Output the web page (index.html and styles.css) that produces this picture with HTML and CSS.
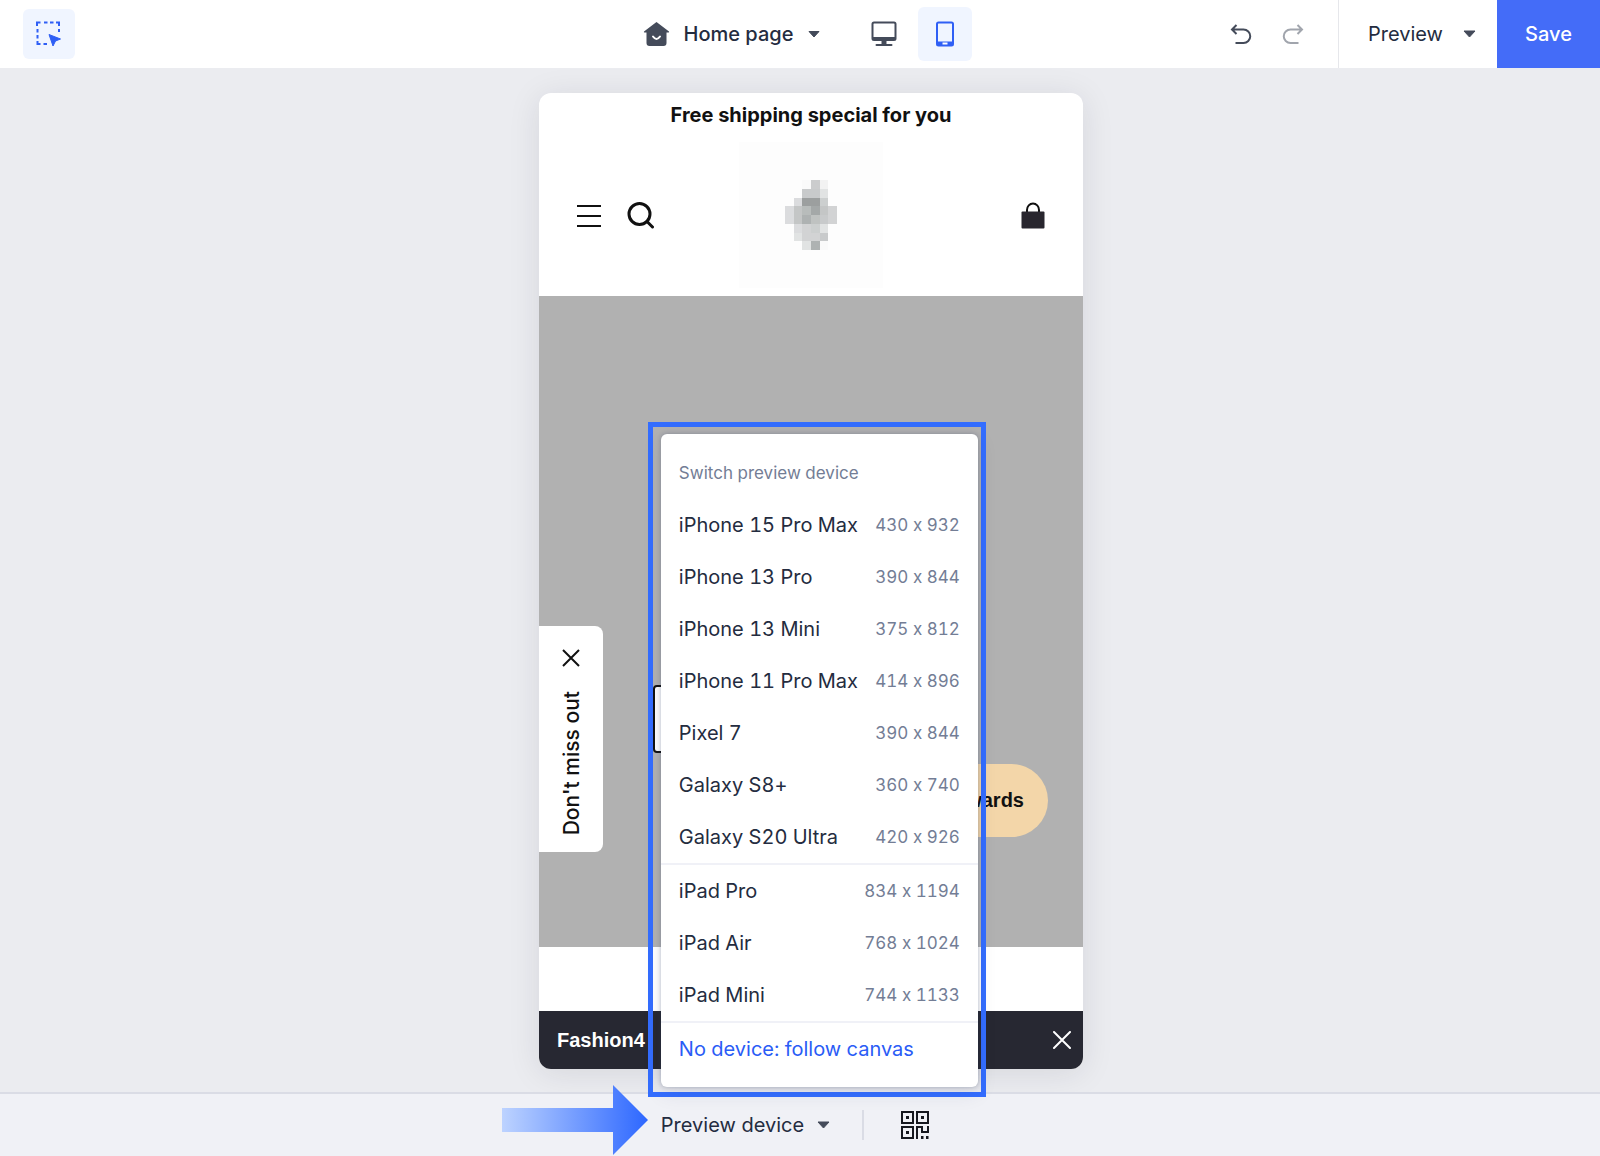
FILE: index.html
```html
<!DOCTYPE html>
<html lang="en">
  <head>
    <meta charset="utf-8">
    <title>Store editor</title>
    <link rel="stylesheet" href="styles.css">
  </head>
  <body>
    <header class="topbar">
      <div class="topbar-left">
        <button class="tool active" aria-label="Select element">
          <svg width="26" height="26" viewBox="0 0 26 26" fill="none">
            <path d="M1 5V1.500H4.500M8 1.500H11.500M14 1.500H17.500M20 1.500H23V5M23 8V11M1.500 8V11.500M1.500 14V17.500M1.500 20V23H4.500M7.500 23H11" stroke="#2f5ff5" stroke-width="2"/>
            <path d="M13 13.500L24.500 18L19.500 20L17 25Z" fill="#2f5ff5" stroke="#2f5ff5" stroke-linejoin="round"/>
          </svg>
        </button>
      </div>

      <div class="topbar-center">
        <label class="page-picker">
          <svg width="27" height="26" viewBox="0 0 27 26">
            <path d="M13.500 1L26 10.500Q26.500 11.500 25.500 11.500H23.500V22Q23.500 25 20.500 25H6.500Q3.500 25 3.500 22V11.500H1.500Q.500 11.500 1 10.500Z" fill="#444b5a"/>
            <path d="M10 15.500Q13.500 20.500 17 15.500" fill="none" stroke="#fff" stroke-width="2" stroke-linecap="round"/>
          </svg>
          <select class="page-select" aria-label="Page">
            <option>Home page</option>
          </select>
          <svg class="caret" width="12" height="7" viewBox="0 0 12 7"><path d="M1 .5H11L6 6Z" fill="#444b5a" stroke="#444b5a" stroke-linejoin="round"/></svg>
        </label>
        <div class="devices">
          <button class="device" aria-label="Desktop">
            <svg width="26" height="26" viewBox="0 0 26 26" fill="none">
              <rect x="1.500" y="1.500" width="23" height="17.500" rx="1.500" stroke="#444b5a" stroke-width="2"/>
              <path d="M2 17.500H24" stroke="#444b5a" stroke-width="3"/>
              <path d="M10.500 19H15.500V23H10.500Z" fill="#444b5a"/>
              <path d="M5.500 24H20.500" stroke="#444b5a" stroke-width="2" stroke-linecap="round"/>
            </svg>
          </button>
          <button class="device active" aria-label="Mobile">
            <svg width="20" height="26" viewBox="0 0 20 26" fill="none">
              <rect x="2" y="1.500" width="16" height="23" rx="1.500" stroke="#2f5ff5" stroke-width="2"/>
              <path d="M2 20.500H18V24H2Z" fill="#2f5ff5"/>
              <path d="M7.500 22.500H12.500" stroke="#fff" stroke-width="2"/>
            </svg>
          </button>
        </div>
      </div>

      <div class="topbar-right">
        <div class="history">
          <button class="icon-btn" aria-label="Undo">
            <svg width="22" height="22" viewBox="0 0 22 22" fill="none" stroke="#444b5a" stroke-width="2"><path d="M6.500 2L2 6.500L6.500 11M2.500 6.500H13.500A6.500 6.500 0 0 1 13.500 20H5.500"/></svg>
          </button>
          <button class="icon-btn" aria-label="Redo">
            <svg width="22" height="22" viewBox="0 0 22 22" fill="none" stroke="#a1a5ad" stroke-width="2"><path d="M15.500 2L20 6.500L15.500 11M19.500 6.500H8.500A6.500 6.500 0 0 0 8.500 20H16.500"/></svg>
          </button>
        </div>
        <button class="preview">
          Preview
          <svg class="caret" width="13" height="8" viewBox="0 0 13 8"><path d="M1 1H12L6.500 7Z" fill="#444b5a" stroke="#444b5a" stroke-linejoin="round"/></svg>
        </button>
        <button class="save">Save</button>
      </div>
    </header>

    <main class="canvas">
      <div class="phone">
        <p class="announcement">Free shipping special for you</p>
        <div class="store-header">
          <div class="store-nav">
            <button class="icon-btn" aria-label="Menu">
              <svg width="24" height="24" viewBox="0 0 24 24" stroke="#111" stroke-width="2"><path d="M0 3H24M0 13H24M0 23H24"/></svg>
            </button>
            <button class="icon-btn" aria-label="Search">
              <svg width="28" height="28" viewBox="0 0 28 28" fill="none" stroke="#111" stroke-width="3" stroke-linecap="round"><circle cx="12.500" cy="13" r="10.500"/><path d="M20 20.500L25.500 26"/></svg>
            </button>
          </div>
          <div class="logo">
            <svg width="52" height="70" viewBox="0 0 6 8" preserveAspectRatio="none" shape-rendering="crispEdges">
              <path fill="#fafafa" d="M2 0h1v1h-1zM4 7h1v1h-1z"/>
              <path fill="#cbcccd" d="M3 0h1v1h-1z"/>
              <path fill="#f2f2f2" d="M4 0h1v1h-1z"/>
              <path fill="#c8cacb" d="M2 1h2v1h-2zM4 4h1v1h-1zM4 6h1v1h-1z"/>
              <path fill="#e1e3e3" d="M4 1h1v1h-1zM4 5h1v1h-1zM1 6h1v1h-1zM2 7h1v1h-1z"/>
              <path fill="#dbdcde" d="M1 2h1v1h-1zM0 3h1v2h-1zM1 5h1v1h-1z"/>
              <path fill="#9c9f9f" d="M2 2h2v1h-2z"/>
              <path fill="#cccfcf" d="M4 2h1v1h-1zM3 5h1v1h-1z"/>
              <path fill="#c4c6c6" d="M1 3h1v2h-1zM4 3h1v1h-1z"/>
              <path fill="#b8bcbb" d="M2 3h1v1h-1z"/>
              <path fill="#a4a8a8" d="M3 3h1v1h-1z"/>
              <path fill="#d2d3d4" d="M5 3h1v2h-1zM2 5h1v2h-1zM3 6h1v1h-1z"/>
              <path fill="#aeb2b2" d="M2 4h1v1h-1zM3 7h1v1h-1z"/>
              <path fill="#bfc2c1" d="M3 4h1v1h-1z"/>
            </svg>
          </div>
          <button class="icon-btn bag" aria-label="Cart">
            <svg width="24" height="27" viewBox="0 0 24 27"><path d="M6 11V8A6 6.500 0 0 1 18 8V11" fill="none" stroke="#111" stroke-width="2"/><rect x=".500" y="9.500" width="23" height="17" rx="1" fill="#28262e"/></svg>
          </button>
        </div>

        <section class="hero">
          <button class="hero-action" aria-label="Shop now"></button>
          <div class="side-tab">
            <button class="icon-btn" aria-label="Close offer">
              <svg width="18" height="18" viewBox="0 0 18 18" stroke="#111" stroke-width="2"><path d="M1 1L17 17M17 1L1 17"/></svg>
            </button>
            <span class="side-tab-text">Don't miss out</span>
          </div>
          <button class="rewards">Rewards</button>
        </section>

        <div class="blank"></div>
        <div class="store-bar">
          <span>Fashion4</span>
          <button class="icon-btn" aria-label="Close">
            <svg width="18" height="18" viewBox="0 0 18 18" stroke="#fff" stroke-width="2" stroke-linecap="round"><path d="M1 1L17 17M17 1L1 17"/></svg>
          </button>
        </div>
      </div>
    </main>

    <footer class="bottombar">
      <div class="device-picker">
        <button class="device-toggle" aria-expanded="true">
          Preview device
          <svg class="caret" width="13" height="8" viewBox="0 0 13 8"><path d="M1 1H12L6.500 7Z" fill="#444b5a" stroke="#444b5a" stroke-linejoin="round"/></svg>
        </button>

        <div class="highlight">
          <div class="menu">
            <h2 class="menu-title">Switch preview device</h2>
            <div class="menu-group">
              <button class="menu-item">iPhone 15 Pro Max <span class="size">430 x 932</span></button>
              <button class="menu-item">iPhone 13 Pro <span class="size">390 x 844</span></button>
              <button class="menu-item">iPhone 13 Mini <span class="size">375 x 812</span></button>
              <button class="menu-item">iPhone 11 Pro Max <span class="size">414 x 896</span></button>
              <button class="menu-item">Pixel 7 <span class="size">390 x 844</span></button>
              <button class="menu-item">Galaxy S8+ <span class="size">360 x 740</span></button>
              <button class="menu-item">Galaxy S20 Ultra <span class="size">420 x 926</span></button>
            </div>
            <div class="menu-group">
              <button class="menu-item">iPad Pro <span class="size">834 x 1194</span></button>
              <button class="menu-item">iPad Air <span class="size">768 x 1024</span></button>
              <button class="menu-item">iPad Mini <span class="size">744 x 1133</span></button>
            </div>
            <div class="menu-group">
              <button class="menu-item follow">No device: follow canvas</button>
            </div>
          </div>
        </div>

        <svg class="arrow" width="146" height="70" viewBox="0 0 146 70">
          <defs>
            <linearGradient id="fade">
              <stop offset="0" stop-color="#bdd3ff"/>
              <stop offset="1" stop-color="#2d67ff"/>
            </linearGradient>
          </defs>
          <path d="M0 23H111V0L146 35L111 70V47H0Z" fill="url(#fade)"/>
        </svg>
      </div>
      <span class="divider"></span>
      <button class="icon-btn" aria-label="QR code">
        <svg width="28" height="28" viewBox="0 0 28 28" fill="none" stroke="#16181f" stroke-width="2">
          <path d="M1 1H12V12H1ZM16 1H27V12H16ZM1 16H12V27H1Z"/>
          <path d="M16 28V16H21V21H27V15"/>
          <path d="M5 6.500H8M20 6.500H23M5 21.500H8M20 26.500H22.500M25 26.500H27.500" stroke-width="3"/>
        </svg>
      </button>
    </footer>
  </body>
</html>
```
FILE: styles.css
```css
* {
  box-sizing: border-box;
}

body {
  margin: 0;
  min-height: 100vh;
  display: flex;
  flex-direction: column;
  background-color: #ebecf0;
  font-family: Inter, "Liberation Sans", sans-serif;
  font-size: 20px;
  color: #242c40;
}

button,
select {
  margin: 0;
  padding: 0;
  border: 0;
  background: none;
  font: inherit;
  color: inherit;
  cursor: pointer;
}

svg {
  display: block;
}

/* top bar */
.topbar {
  display: grid;
  grid-template-columns: 1fr auto 1fr;
  height: 68px;
  background-color: #fff;
}

.topbar-left,
.topbar-center,
.topbar-right,
.page-picker,
.devices,
.history,
.preview {
  display: flex;
  align-items: center;
}

.topbar-left {
  padding-left: 23px;
}

.tool {
  display: grid;
  place-items: center;
  width: 52px;
  height: 50px;
  border-radius: 6px;
}

.tool.active,
.device.active {
  background-color: #f0f5ff;
}

.topbar-center {
  gap: 37px;
  padding-left: 14px;
}

.page-picker {
  gap: 14px;
  font-weight: 500;
}

.page-select {
  appearance: none;
}

.devices {
  gap: 7px;
}

.device {
  display: grid;
  place-items: center;
  width: 54px;
  height: 54px;
  border-radius: 6px;
}

.topbar-right {
  justify-content: flex-end;
  align-items: stretch;
}

.history {
  gap: 30px;
  padding-right: 34px;
}

.icon-btn {
  flex: none;
}

.preview {
  gap: 20px;
  padding: 0 21px 0 29px;
  border-left: 1px solid #e6e7eb;
}

.save {
  width: 103px;
  background-color: #446cf8;
  color: #fff;
  font-weight: 500;
}

/* canvas */
.canvas {
  flex: 1;
  display: flex;
  justify-content: center;
  padding: 25px 0 23px 22px;
}

.phone {
  width: 34vw;
  display: flex;
  flex-direction: column;
  border-radius: 12px;
  overflow: hidden;
  background-color: #fff;
  box-shadow: 0 4px 32px rgba(30, 34, 50, 0.1);
}

.announcement {
  margin: 0;
  line-height: 44px;
  text-align: center;
  font-size: 20px;
  font-weight: 700;
  color: #111;
}

.store-header {
  display: grid;
  grid-template-columns: 1fr auto 1fr;
  align-items: center;
  padding: 5px 38px 8px;
}

.store-nav {
  display: flex;
  align-items: center;
  gap: 26px;
}

.logo {
  display: grid;
  place-items: center;
  width: 144px;
  height: 146px;
  background-color: #fdfdfd;
}

.bag {
  justify-self: end;
}

.hero {
  flex: 1;
  position: relative;
  display: flex;
  flex-direction: column;
  justify-content: flex-end;
  align-items: center;
  padding-bottom: 194px;
  background-color: #b1b1b1;
}

.hero-action {
  width: 58%;
  height: 68px;
  border: 2px solid #111;
  border-radius: 4px;
  background-color: #fff;
}

.side-tab {
  position: absolute;
  left: 0;
  bottom: 95px;
  display: flex;
  flex-direction: column;
  align-items: center;
  gap: 24px;
  width: 64px;
  padding: 23px 0 17px;
  border-radius: 0 8px 8px 0;
  background-color: #fff;
  color: #111;
}

.side-tab-text {
  writing-mode: vertical-rl;
  transform: rotate(180deg);
  font-size: 21px;
  font-weight: 500;
}

.rewards {
  position: absolute;
  right: 35px;
  bottom: 110px;
  height: 73px;
  padding: 0 24px 0 28px;
  border-radius: 37px;
  background-color: #f3d6a9;
  font-family: "Liberation Sans", sans-serif;
  font-weight: 700;
  color: #111;
}

.blank {
  height: 64px;
}

.store-bar {
  display: flex;
  justify-content: space-between;
  align-items: center;
  height: 58px;
  padding: 0 12px 0 18px;
  background-color: #272832;
  color: #fff;
  font-family: "Liberation Sans", sans-serif;
  font-weight: 700;
}

/* bottom bar */
.bottombar {
  display: flex;
  justify-content: center;
  align-items: center;
  height: 64px;
  padding-right: 10px;
  border-top: 2px solid #dadce5;
  background-color: #f0f1f6;
}

.device-picker {
  position: relative;
}

.device-toggle {
  display: flex;
  align-items: center;
  gap: 13px;
}

.divider {
  width: 2px;
  height: 30px;
  margin: 0 37px 0 32px;
  background-color: #dadce5;
}

.highlight {
  position: absolute;
  left: -13px;
  bottom: 40px;
  width: 338px;
  padding: 7px 3px 5px 8px;
  border: 5px solid #336dff;
}

.arrow {
  position: absolute;
  right: 100%;
  top: 50%;
  margin: -40px 13px 0 0;
}

.menu {
  padding: 13px 0 12px;
  border-radius: 6px;
  background-color: #fff;
  box-shadow: 0 0 4px rgba(40, 50, 90, 0.3), 0 6px 20px rgba(40, 50, 90, 0.1);
  font-variant-ligatures: no-contextual;
  font-variant-numeric: tabular-nums;
}

.menu-title {
  margin: 0;
  padding: 0 18px;
  font-size: 17px;
  font-weight: 400;
  line-height: 52px;
  color: #737d95;
}

.menu-group + .menu-group {
  border-top: 2px solid #f0f1f7;
}

.menu-item {
  display: flex;
  justify-content: space-between;
  align-items: center;
  width: 100%;
  height: 52px;
  padding: 0 18px;
  font-variant: inherit;
  text-align: left;
}

.menu-item:hover {
  background-color: #f0f5ff;
}

.size {
  font-size: 17px;
  color: #737d95;
}

.follow {
  color: #2a5cf6;
}
```
